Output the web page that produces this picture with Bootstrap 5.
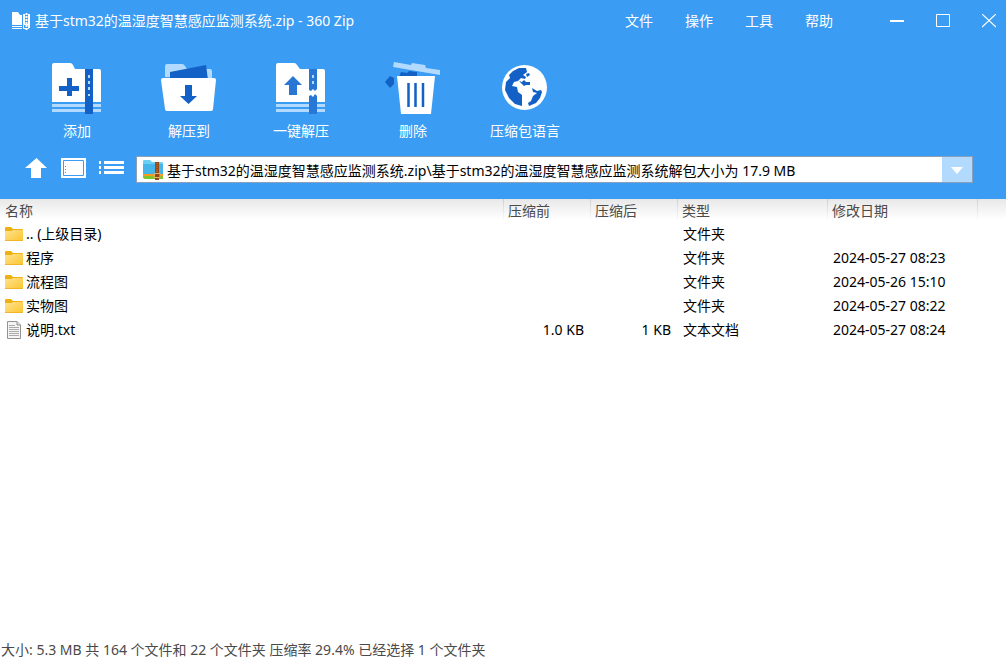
<!DOCTYPE html>
<html lang="zh-CN">
<head>
<meta charset="utf-8">
<meta name="viewport" content="width=device-width, initial-scale=1">
<title>360 Zip</title>
<link href="https://cdn.jsdelivr.net/npm/bootstrap@5.3.0/dist/css/bootstrap.min.css" rel="stylesheet">
<style>
  body { font-family: "Noto Sans", "Noto Sans CJK SC", sans-serif; font-size: 14px; line-height: 20px; color: #000; background: #fff; }
  svg { display: block; flex: none; }
  button { font: inherit; }
  .app-head { background: #3a9cf2; color: #fff; height: 199px; }
  .title-bar { height: 42px; padding-left: 11px; }
  .title-text { font-size: 14px; line-height: 20px; font-weight: 400; }
  .plain-btn { background: none; border: 0; padding: 0; color: #fff; }
  .menu-list .plain-btn { width: 60px; }
  .win-list { margin-left: 25px; }
  .win-list .plain-btn { width: 46px; height: 38px; }
  .win-list .plain-btn:last-child { margin-right: -6px; }
  .tool-list { padding: 18px 0 0 21px; height: 114px; }
  .tool-list .plain-btn { width: 112px; height: 81px; }
  .tool-list svg { height: 56px; width: 60px; }
  .address-row { padding: 0 33px 0 25px; }
  .view-list { width: 111px; gap: 13px; padding-bottom: 3px; }
  .address-box { height: 27px; background: #fff; border: 1px solid #8aa0bb; padding-left: 6px; }
  .address-box input { border: 0; background: none; padding: 0; height: 24px; font: inherit; color: #000; outline: 0; }
  .address-box .drop-btn { width: 30px; align-self: stretch; background: #b2daff; }
  .file-table { table-layout: fixed; width: 100%; border-collapse: collapse; }
  .file-table th { height: 23px; padding: 1px 0 0 5px; font-weight: 400; color: #4a4a4a; background: linear-gradient(#e8e8e8, #fff 90%); position: relative; }
  .file-table th + th::before { content: ""; position: absolute; left: 0; top: 0; bottom: 0; width: 1px; background: linear-gradient(#cfcfcf, #fff); }
  .file-table td { height: 24px; padding: 0 0 0 6px; white-space: nowrap; }
  .file-table td:first-child { padding-left: 5px; }
  .file-table td.text-end { padding-right: 6px; }
  .file-name { gap: 3px; }
  .size-col { width: 87px; }
  .info-col { width: 150px; }
  .end-col { width: 29px; }
  .status-bar { color: #4a4a4a; padding: 0 0 1px 1px; }
</style>
</head>
<body class="min-vh-100 d-flex flex-column">
<svg width="0" height="0" class="position-absolute" aria-hidden="true">
  <defs>
    <linearGradient id="folderFill" x1="0" y1="0" x2="1" y2="1"><stop offset="0" stop-color="#ffe391"/><stop offset="1" stop-color="#fdc52f"/></linearGradient>
    <symbol id="folder" viewBox="0 0 18 14"><path d="M0 1Q0 0 1 0H6L8 2H17Q18 2 18 3V8H0Z" fill="#eeb111"/><path d="M0 4H7L8 3H18V13Q18 14 17 14H1Q0 14 0 13Z" fill="url(#folderFill)"/><path d="M0 13.5H18" stroke="#efb62c"/></symbol>
  </defs>
</svg>
<header class="app-head">
  <div class="title-bar d-flex align-items-center">
    <svg width="20" height="20" viewBox="0 0 20 20" fill="#fff"><path d="M1 1H7L9 4H11V14H1ZM1 15H11V16H1ZM1 17H11V18H1ZM12 3H14V13H12ZM17 3H19V17H17Z"/><path d="M15.5 2V20" stroke="#fff" stroke-width="2" stroke-dasharray="2 1"/><path d="M12.5 13.5H17.5V17.5H12.5Z" fill="none" stroke="#fff"/></svg>
    <h1 class="title-text mb-0 ms-1 flex-grow-1">基于stm32的温湿度智慧感应监测系统.zip - 360 Zip</h1>
    <nav class="menu-list d-flex" aria-label="菜单">
      <button type="button" class="plain-btn">文件</button><button type="button" class="plain-btn">操作</button><button type="button" class="plain-btn">工具</button><button type="button" class="plain-btn">帮助</button>
    </nav>
    <div class="win-list d-flex">
      <button type="button" class="plain-btn d-flex align-items-center justify-content-center" aria-label="最小化"><svg width="14" height="14"><path d="M0 7H14" stroke="#fff" stroke-width="2"/></svg></button>
      <button type="button" class="plain-btn d-flex align-items-center justify-content-center" aria-label="最大化"><svg width="14" height="14"><path d="M.5.5H13.5V12.5H.5Z" stroke="#fff" fill="none"/></svg></button>
      <button type="button" class="plain-btn d-flex align-items-center justify-content-center" aria-label="关闭"><svg width="14" height="14"><path d="M0 0L14 13M14 0L0 13" stroke="#fff" stroke-width="1.2"/></svg></button>
    </div>
  </div>
  <div class="tool-list d-flex">
    <button type="button" class="plain-btn d-flex flex-column align-items-center justify-content-between">
      <svg viewBox="0 0 60 56"><path d="M5 5Q5 3 7 3H23Q25 3 26 5L28 9H52Q54 9 54 11V42H5Z" fill="#fff"/><path d="M5 44H54V47H5ZM5 49H54V52H5Z" fill="#b2daff"/><path d="M38 9H46V54H38ZM12 26H20V18H25V26H32V31H25V36H20V31H12Z" fill="#1360c6"/><path d="M41 15h2v3h-2zM41 21h2v3h-2zM41 27h2v3h-2zM41 34h2v2h-2z" fill="#b2daff"/></svg><span>添加</span></button>
    <button type="button" class="plain-btn d-flex flex-column align-items-center justify-content-between">
      <svg viewBox="0 0 60 56"><path d="M6 17V6Q6 4 8 4H23Q25 4 26 6L28 9H51Q53 9 53 11V18Z" fill="#b2daff"/><path d="M11 12L47 5L49 20H11Z" fill="#1360c6"/><path d="M4 18H55Q57 18 57 20L54 49Q54 51 52 51H8Q6 51 6 49L2 20Q2 18 4 18Z" fill="#fff"/><path d="M26 25H33V36H38L29.500 44L21 36H26Z" fill="#1360c6"/></svg><span>解压到</span></button>
    <button type="button" class="plain-btn d-flex flex-column align-items-center justify-content-between">
      <svg viewBox="0 0 60 56"><path d="M5 5Q5 3 7 3H23Q25 3 26 5L29 9H52Q54 9 54 11V42H5Z" fill="#fff"/><path d="M5 44H54V47H5ZM5 49H54V52H5Z" fill="#b2daff"/><path d="M38 9H46V29L44 31L42 29L40 31L38 30ZM38 36L40 35L42 37L44 34L46 36V54H38ZM18 35V25H13L22 16L31 25H26V35Z" fill="#2877d4"/><path d="M41 15h2v3h-2zM41 21h2v3h-2z" fill="#b2daff"/></svg><span>一键解压</span></button>
    <button type="button" class="plain-btn d-flex flex-column align-items-center justify-content-between">
      <svg viewBox="0 0 60 56"><path d="M11 2L28 5L29 3L42 5L43 8L57 10V15L10 7Z" fill="#b2daff"/><path d="M16 17L18 12L24 13L26 11L34 12V17ZM2 22L7 16L11 18V24L7 28Z" fill="#1360c6"/><path d="M14 16H52L48 54H18Z" fill="#fff"/><path d="M25.500 23V47M32.500 23V47M40 23V47" stroke="#1360c6" stroke-width="2.500"/></svg><span>删除</span></button>
    <button type="button" class="plain-btn d-flex flex-column align-items-center justify-content-between">
      <svg viewBox="0 0 60 56"><circle cx="29.500" cy="27.500" r="22.500" fill="#fff"/><path d="M18 11L24 8L31 8L32 12L28 15L31 17L30 19L26 18L23 21L19 22L17 26L22 27L23 32L27 35L27 46L20 44L14 38L10 30L11 22L15 18L14 15ZM24 21L27 22L29 20L31 22L35 22L35 25L31 25L29 26ZM31 14L34 13L35 15L32 17ZM37 28L42 31L46 30L47 32L45 38L41 43L34 46L33 43L36 41L38 36L42 33L38 32Z" fill="#1360c6"/></svg><span>压缩包语言</span></button>
  </div>
  <div class="address-row d-flex align-items-center">
    <div class="view-list d-flex align-items-center">
      <button type="button" class="plain-btn" aria-label="上级目录"><svg width="23" height="22" viewBox="0 0 23 22"><path d="M11.500 1L22 11H16V21H6V11H0Z" fill="#fff"/></svg></button>
      <button type="button" class="plain-btn" aria-label="预览"><svg width="25" height="20"><path d="M0 0H25V20H0Z" fill="#fff"/><path d="M2.500 2.500H22.500V17.500H2.500Z" fill="none" stroke="#3a9cf2"/><path d="M4.500 8V15" stroke="#3a9cf2" stroke-dasharray="1 2"/></svg></button>
      <button type="button" class="plain-btn" aria-label="列表"><svg width="25" height="14"><path d="M0 1.500H2M5 1.500H25M0 6.500H2M5 6.500H25M0 11.500H2M5 11.500H25" stroke="#fff" stroke-width="3"/></svg></button>
    </div>
    <div class="address-box d-flex align-items-center flex-grow-1">
      <svg width="20" height="20" viewBox="0 0 20 20"><path d="M0 1Q0 0 1 0H7L9 2H19L20 3V15H0Z" fill="#6cd0f5"/><path d="M0 4H20V15H0Z" fill="#45b5ea"/><path d="M0 14H20V19H2Q0 19 0 17Z" fill="#7cc52b"/><path d="M0 14H20V16H0Z" fill="#f59b1d"/><path d="M12 2H16V20H12Z" fill="#974817"/><path d="M14 3V19" stroke="#c88143" stroke-dasharray="1 1"/><path d="M11.500 13.500H17V17.500H11.500Z" fill="#974817" stroke="#e2b06a"/></svg>
      <input type="text" class="flex-grow-1 ms-1" aria-label="地址" value="基于stm32的温湿度智慧感应监测系统.zip\基于stm32的温湿度智慧感应监测系统解包大小为 17.9 MB">
      <button type="button" class="plain-btn drop-btn d-flex align-items-center justify-content-center" aria-label="展开"><svg width="12" height="8"><path d="M0 1H12L6 8Z" fill="#fff"/></svg></button>
    </div>
  </div>
</header>
<main class="flex-grow-1">
  <table class="file-table">
    <colgroup><col><col class="size-col"><col class="size-col"><col class="info-col"><col class="info-col"><col class="end-col"></colgroup>
    <thead><tr><th scope="col">名称</th><th scope="col">压缩前</th><th scope="col">压缩后</th><th scope="col">类型</th><th scope="col">修改日期</th><th></th></tr></thead>
    <tbody>
      <tr><td><div class="file-name d-flex align-items-center"><svg width="18" height="14"><use href="#folder"/></svg>.. (上级目录)</div></td><td></td><td></td><td>文件夹</td><td></td><td></td></tr>
      <tr><td><div class="file-name d-flex align-items-center"><svg width="18" height="14"><use href="#folder"/></svg>程序</div></td><td></td><td></td><td>文件夹</td><td>2024-05-27 08:23</td><td></td></tr>
      <tr><td><div class="file-name d-flex align-items-center"><svg width="18" height="14"><use href="#folder"/></svg>流程图</div></td><td></td><td></td><td>文件夹</td><td>2024-05-26 15:10</td><td></td></tr>
      <tr><td><div class="file-name d-flex align-items-center"><svg width="18" height="14"><use href="#folder"/></svg>实物图</div></td><td></td><td></td><td>文件夹</td><td>2024-05-27 08:22</td><td></td></tr>
      <tr><td><div class="file-name d-flex align-items-center"><svg width="18" height="18"><path d="M2.500.500H12L15.500 4V17.500H2.500Z" fill="#f4f4f4" stroke="#929292"/><path d="M12 .5V4H15.500" fill="#ddd" stroke="#929292"/><path d="M4 4.500H10M4 6.500H14M4 8.500H14M4 10.500H14M4 12.500H14M4 14.500H14" stroke="#aaa"/></svg>说明.txt</div></td><td class="text-end">1.0 KB</td><td class="text-end">1 KB</td><td>文本文档</td><td>2024-05-27 08:24</td><td></td></tr>
    </tbody>
  </table>
</main>
<footer class="status-bar">大小: 5.3 MB 共 164 个文件和 22 个文件夹 压缩率 29.4% 已经选择 1 个文件夹</footer>
<script src="https://cdn.jsdelivr.net/npm/bootstrap@5.3.0/dist/js/bootstrap.bundle.min.js"></script>
</body>
</html>
